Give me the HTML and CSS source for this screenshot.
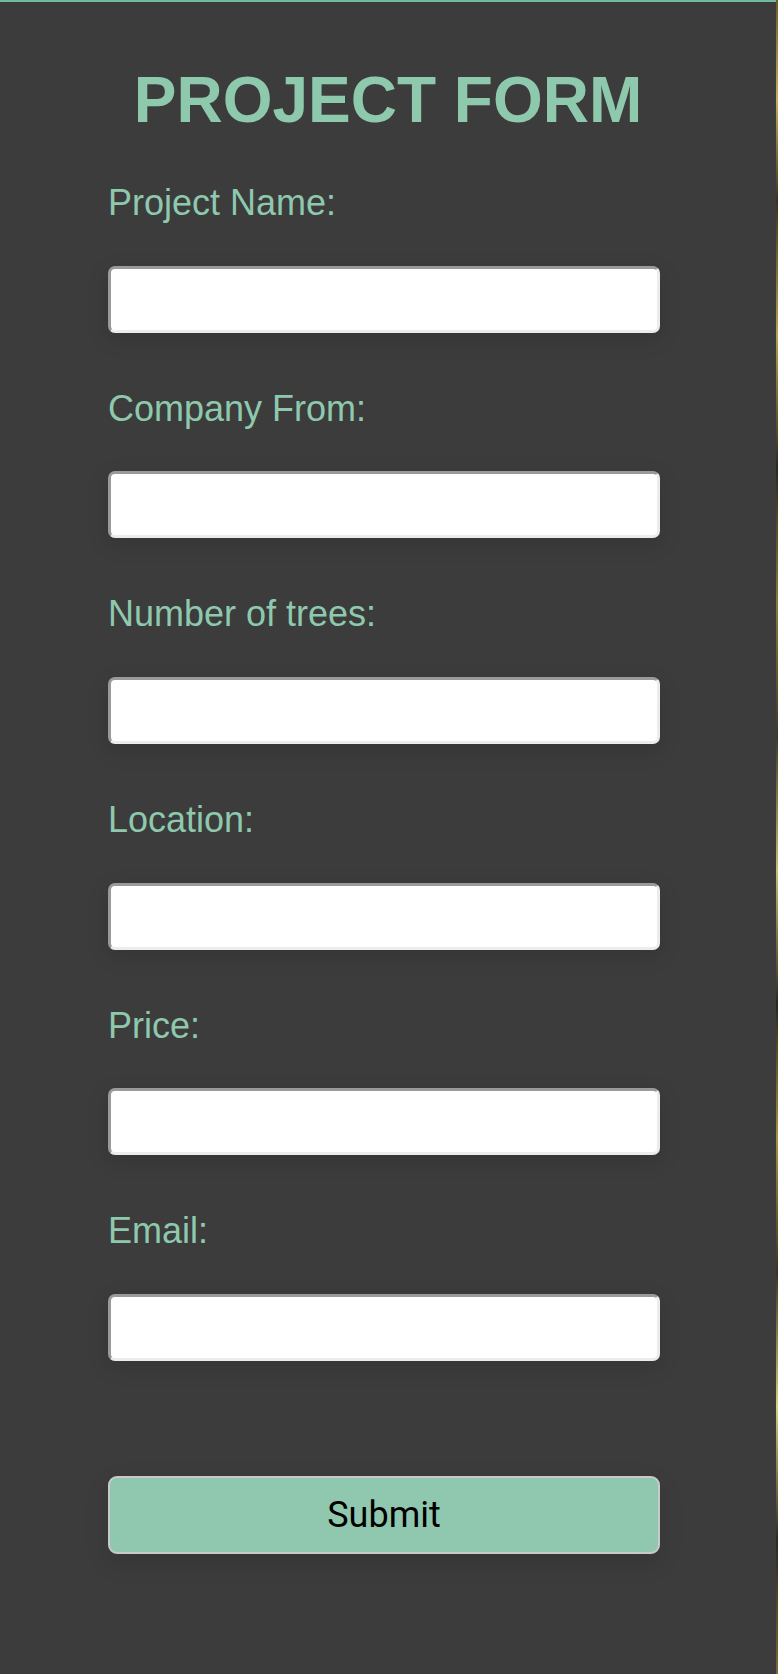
FILE: index.html
```html
<!DOCTYPE html>
<html lang="en">
<head>
<meta charset="utf-8">
<title>Project Form</title>
<link rel="stylesheet" href="styles.css">
</head>
<body>
<div class="page">
  <h1 class="title">PROJECT FORM</h1>
  <form class="form">
    <div class="field">
      <label class="label" for="pname">Project Name:</label>
      <input class="input" id="pname" type="text">
    </div>
    <div class="field">
      <label class="label" for="company">Company From:</label>
      <input class="input" id="company" type="text">
    </div>
    <div class="field">
      <label class="label" for="trees">Number of trees:</label>
      <input class="input" id="trees" type="text">
    </div>
    <div class="field">
      <label class="label" for="loc">Location:</label>
      <input class="input" id="loc" type="text">
    </div>
    <div class="field">
      <label class="label" for="price">Price:</label>
      <input class="input" id="price" type="text">
    </div>
    <div class="field">
      <label class="label" for="email">Email:</label>
      <input class="input" id="email" type="text">
    </div>
    <button class="submit" type="button">Submit</button>
  </form>
</div>
</body>
</html>
```

FILE: styles.css
```css
html, body {
  margin: 0;
  padding: 0;
}
body {
  width: 778px;
  min-height: 1674px;
  background: linear-gradient(180deg, #6b5a2e 0%, #c9ae5c 6%, #3a3320 12%, #b9a24e 20%, #2c2a1e 28%, #8a7a3c 36%, #3c3a2a 44%, #c8c070 52%, #2a281c 60%, #a8923e 68%, #3a3424 76%, #d8d07a 84%, #2c2a20 92%, #7a6a34 100%);
  font-family: "Liberation Sans", Arial, Helvetica, sans-serif;
}
.page {
  width: 776px;
  min-height: 1674px;
  box-sizing: border-box;
  background: #3c3c3c;
  border-top: 2px solid #74b99b;
  padding-top: 62px;
}
.title {
  margin: 0;
  font-size: 64px;
  line-height: 72px;
  font-weight: bold;
  text-align: center;
  color: #8ec9ae;
}
.form {
  margin: 46px 0 0 108px;
  width: 552px;
  display: flex;
  flex-direction: column;
}
.field {
  display: flex;
  flex-direction: column;
  margin-bottom: 55.2px;
}
.label {
  font-size: 36px;
  line-height: 42px;
  color: #8ec9ae;
  margin-bottom: 41.5px;
}
.input {
  box-sizing: border-box;
  width: 552px;
  height: 67px;
  margin: 0;
  padding: 0 12px;
  background: #ffffff;
  border-style: solid;
  border-width: 3px;
  border-color: #9a9a9a #ececec #ececec #9a9a9a;
  border-radius: 7px;
  box-shadow: 0 6px 22px rgba(0, 0, 0, 0.13);
  font-size: 24px;
  outline: none;
}
.submit {
  box-sizing: border-box;
  margin-top: 60px;
  width: 552px;
  height: 78px;
  background: #8fc8ae;
  border: 2px solid #c9c9c9;
  border-radius: 9px;
  color: #000;
  font-family: Roboto, "Liberation Sans", Arial, sans-serif;
  font-size: 36px;
  padding: 0;
  box-shadow: 0 8px 24px rgba(0, 0, 0, 0.13);
}
```
